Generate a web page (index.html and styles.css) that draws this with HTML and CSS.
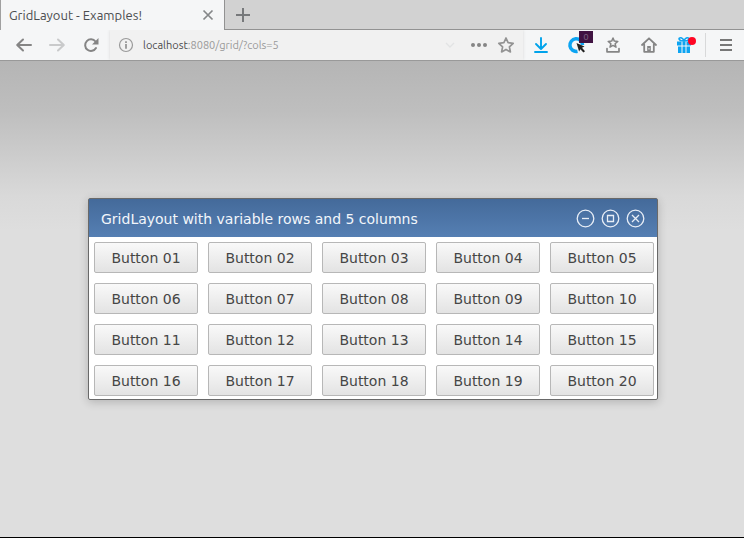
FILE: index.html
```html
<!DOCTYPE html>
<html lang="en">
<head>
<meta charset="utf-8">
<title>GridLayout - Examples!</title>
<link rel="stylesheet" href="styles.css">
</head>
<body>
<header class="browser">
  <div class="tabs">
    <div class="tab">
      <span class="tab-title">GridLayout - Examples!</span>
      <button class="icon-button tab-close" aria-label="Close tab"><svg width="16" height="16" viewBox="0 0 16 16"><path d="M3.5 3.5l9 9M12.500 3.500l-9 9" stroke="#858789" stroke-width="1.700"/></svg></button>
    </div>
    <button class="icon-button new-tab" aria-label="New tab"><svg width="16" height="16" viewBox="0 0 16 16"><path d="M8 1v14M1 8h14" stroke="#77797b" stroke-width="2"/></svg></button>
  </div>
  <nav class="toolbar">
    <div class="history">
      <button class="icon-button" aria-label="Back"><svg width="18" height="16" viewBox="0 0 18 16"><path d="M16 8H2.500M8 2.500L2.200 8l5.800 5.500" fill="none" stroke="#858585" stroke-width="2" stroke-linecap="round" stroke-linejoin="round"/></svg></button>
      <button class="icon-button" aria-label="Forward"><svg width="18" height="16" viewBox="0 0 18 16"><path d="M1 8h13.500M9 2.500l5.800 5.500-5.800 5.500" fill="none" stroke="#c9cacb" stroke-width="2" stroke-linecap="round" stroke-linejoin="round"/></svg></button>
      <button class="icon-button" aria-label="Reload"><svg width="16" height="16" viewBox="0 0 16 16"><path d="M13 11a5.800 5.800 0 1 1-.5-6.500" fill="none" stroke="#858585" stroke-width="2" stroke-linecap="round"/><path d="M15.500 1v6.500H9z" fill="#858585"/></svg></button>
    </div>
    <div class="address">
      <svg width="16" height="16" viewBox="0 0 16 16"><circle cx="8" cy="8" r="6.500" fill="none" stroke="#9a9a9a" stroke-width="1.200"/><path d="M8 7v4.800M8 4.200v1.800" stroke="#8b8b8b" stroke-width="1.600"/></svg>
      <span class="url"><span class="host">localhost</span>:8080/grid/?cols=5</span>
      <button class="icon-button chevron" aria-label="History"><svg width="10" height="10" viewBox="0 0 10 10"><path d="M1 3l4 4 4-4" fill="none" stroke="#e2e3e4" stroke-width="1.300"/></svg></button>
      <button class="icon-button" aria-label="Page actions"><svg width="18" height="16" viewBox="0 0 18 16" fill="#858585"><circle cx="3" cy="8" r="2"/><circle cx="9" cy="8" r="2"/><circle cx="15" cy="8" r="2"/></svg></button>
      <button class="icon-button" aria-label="Bookmark"><svg width="18" height="18" viewBox="0 0 18 18"><path d="M9 2l2.100 4.700 5.100.600-3.800 3.500 1 5.100L9 13.400l-4.400 2.500 1-5.100-3.800-3.500 5.100-.600z" fill="none" stroke="#939393" stroke-width="1.700" stroke-linejoin="round"/></svg></button>
    </div>
    <div class="actions">
      <button class="icon-button" aria-label="Downloads"><svg width="16" height="18" viewBox="0 0 16 18"><path d="M8 2v10.500M3 8l5 5 5-5M2 16h12" fill="none" stroke="#00a3eb" stroke-width="1.900" stroke-linecap="round" stroke-linejoin="round"/></svg></button>
      <button class="icon-button badge-host" aria-label="Container"><svg width="20" height="20" viewBox="0 0 20 20"><path d="M10.500 16.300A6.300 6.300 0 1 1 15.500 10" fill="none" stroke="#0ca4f2" stroke-width="3.500"/><path d="M9.500 8l8 3.600-2.500 1.200 3 3.400-1.600 1.400-3-3.400-1.300 2.400z" fill="#222"/></svg><span class="badge">0</span></button>
      <button class="icon-button" aria-label="Bookmarks menu"><svg width="16" height="18" viewBox="0 0 16 18"><path d="M8 2l1.300 3.100 3.500.3-2.700 2.300.9 3.500L8 9.400l-3 1.800.9-3.500-2.700-2.300 3.500-.3z" fill="none" stroke="#858585" stroke-width="1.500" stroke-linejoin="round"/><path d="M2 12.500v3.300h12v-3.300" fill="none" stroke="#858585" stroke-width="1.700" stroke-linecap="round" stroke-linejoin="round"/></svg></button>
      <button class="icon-button" aria-label="Home"><svg width="16" height="16" viewBox="0 0 16 16"><path d="M1 8l7-6.700L15 8M3.200 7.500v7.300h9.600V7.500" fill="none" stroke="#858585" stroke-width="1.800" stroke-linecap="round" stroke-linejoin="round"/><path d="M6.200 14.500V9h3.600v5.500z" fill="#858585"/><path d="M8 11v1.500" stroke="#f5f6f7"/></svg></button>
      <button class="icon-button" aria-label="Gifts"><svg width="22" height="18" viewBox="0 0 22 18"><path d="M3 5.500h14v4H3zM4 10.500h12V17H4z" fill="#0ca4f2"/><path d="M8 5v12M12 5v12" stroke="#f5f6f7"/><path d="M10 5C4 5 4 1.500 7 1.700 9 2 10 5 10 5s1-3 3-3.300C16 1.500 16 5 10 5z" fill="none" stroke="#0ca4f2" stroke-width="1.600"/><circle cx="18" cy="5" r="4" fill="#ff0623"/></svg></button>
      <span class="divider"></span>
      <button class="icon-button" aria-label="Menu"><svg width="14" height="14" viewBox="0 0 14 14"><path d="M1 2h12M1 7h12M1 12h12" stroke="#777" stroke-width="1.800"/></svg></button>
    </div>
  </nav>
</header>
<main class="page">
  <section class="window" aria-labelledby="window-title">
    <header class="window-header">
      <h1 class="window-title" id="window-title">GridLayout with variable rows and 5 columns</h1>
      <div class="window-controls">
        <button class="icon-button" aria-label="Minimize"><svg width="19" height="19" viewBox="0 0 19 19" fill="none" stroke="#e8eef6" stroke-width="1.300"><circle cx="9.500" cy="9.500" r="8.300"/><path d="M6 9.500h7"/></svg></button>
        <button class="icon-button" aria-label="Maximize"><svg width="19" height="19" viewBox="0 0 19 19" fill="none" stroke="#e8eef6" stroke-width="1.300"><circle cx="9.500" cy="9.500" r="8.300"/><path d="M6.500 6.500h6v6h-6z"/></svg></button>
        <button class="icon-button" aria-label="Close"><svg width="19" height="19" viewBox="0 0 19 19" fill="none" stroke="#e8eef6" stroke-width="1.300"><circle cx="9.500" cy="9.500" r="8.300"/><path d="M6 6l7 7M13 6l-7 7"/></svg></button>
      </div>
    </header>
    <div class="grid">
      <button class="cell">Button 01</button>
      <button class="cell">Button 02</button>
      <button class="cell">Button 03</button>
      <button class="cell">Button 04</button>
      <button class="cell">Button 05</button>
      <button class="cell">Button 06</button>
      <button class="cell">Button 07</button>
      <button class="cell">Button 08</button>
      <button class="cell">Button 09</button>
      <button class="cell">Button 10</button>
      <button class="cell">Button 11</button>
      <button class="cell">Button 12</button>
      <button class="cell">Button 13</button>
      <button class="cell">Button 14</button>
      <button class="cell">Button 15</button>
      <button class="cell">Button 16</button>
      <button class="cell">Button 17</button>
      <button class="cell">Button 18</button>
      <button class="cell">Button 19</button>
      <button class="cell">Button 20</button>
    </div>
  </section>
</main>
</body>
</html>
```
FILE: styles.css
```css
* {
  box-sizing: border-box;
}

body {
  display: flex;
  flex-direction: column;
  min-height: 100vh;
  margin: 0;
  font-family: "DejaVu Sans", sans-serif;
  font-size: 14px;
}

svg {
  display: block;
}

.icon-button {
  display: flex;
  justify-content: center;
  padding: 0;
  border: 0;
  background: none;
}

.browser {
  font-family: Ubuntu, "Noto Sans", sans-serif;
  border-bottom: 1px solid #999;
}

.tabs {
  display: flex;
  height: 30px;
  background: #d2d2d2;
}

.tab {
  display: flex;
  align-items: center;
  justify-content: space-between;
  width: 225px;
  padding: 0 8px;
  border-left: 1px solid #a0a0a0;
  border-right: 1px solid #929292;
  background: #f5f6f7;
  color: #4b4d4f;
  font-size: 13px;
}

.new-tab {
  flex: 1;
  align-items: center;
  justify-content: flex-start;
  padding-left: 10px;
  border-bottom: 1px solid #929292;
}

.toolbar {
  display: flex;
  height: 30px;
  background: #f5f6f7;
}

.history {
  display: flex;
  align-items: center;
  gap: 16px;
  padding: 0 11px 0 15px;
}

.address {
  display: flex;
  flex: 1;
  align-items: center;
  gap: 9px;
  padding: 0 8px;
  background: #f1f1f1;
  box-shadow: 0 0 3px #d8d8d8;
  clip-path: inset(0 -4px);
}

.url {
  flex: 1;
  color: #999;
  font-size: 11px;
}

.host {
  color: #4b4b4b;
}

.chevron {
  margin-right: 6px;
}

.actions {
  display: flex;
  align-items: center;
  gap: 14px;
  padding: 0 7px;
}

.actions .icon-button {
  width: 22px;
}

.badge-host {
  position: relative;
}

.badge {
  position: absolute;
  top: -4px;
  right: -5px;
  width: 14px;
  height: 12px;
  background: #401342;
  color: #7b6280;
  font-size: 9px;
  line-height: 12px;
  text-align: center;
}

.divider {
  width: 1px;
  height: 24px;
  margin: 0 -5px;
  background: #d8d9da;
}

.page {
  display: flex;
  flex: 1;
  align-items: center;
  justify-content: center;
  padding: 16px 16px 16px 18px;
  border-bottom: 1px solid #000;
  background: linear-gradient(#b5b5b5, #bebebe 50px, #d9d9d9 135px, #dedede 170px);
}

.window {
  border: 1px solid #696969;
  border-radius: 2px;
  background: #fff;
  box-shadow: 0 2px 10px rgba(0, 0, 0, 0.2);
}

.window-header {
  display: flex;
  align-items: center;
  justify-content: space-between;
  height: 38px;
  padding: 1px 12px 0;
  background: linear-gradient(#446a9a, #557fb3);
  color: #f2f6fb;
}

.window-title {
  margin: 0;
  font-size: 14px;
  font-weight: 400;
}

.window-controls {
  display: flex;
  gap: 6px;
}

.grid {
  display: grid;
  grid-template-columns: repeat(5, minmax(104px, 1fr));
  gap: 10px;
  padding: 5px 3px 3px 5px;
}

.cell {
  height: 31px;
  padding: 0;
  border: 1px solid #b7b7b7;
  border-radius: 2px;
  background: linear-gradient(#f9f9f9, #e3e3e3);
  color: #464646;
  font: 14px "DejaVu Sans", sans-serif;
}
```
